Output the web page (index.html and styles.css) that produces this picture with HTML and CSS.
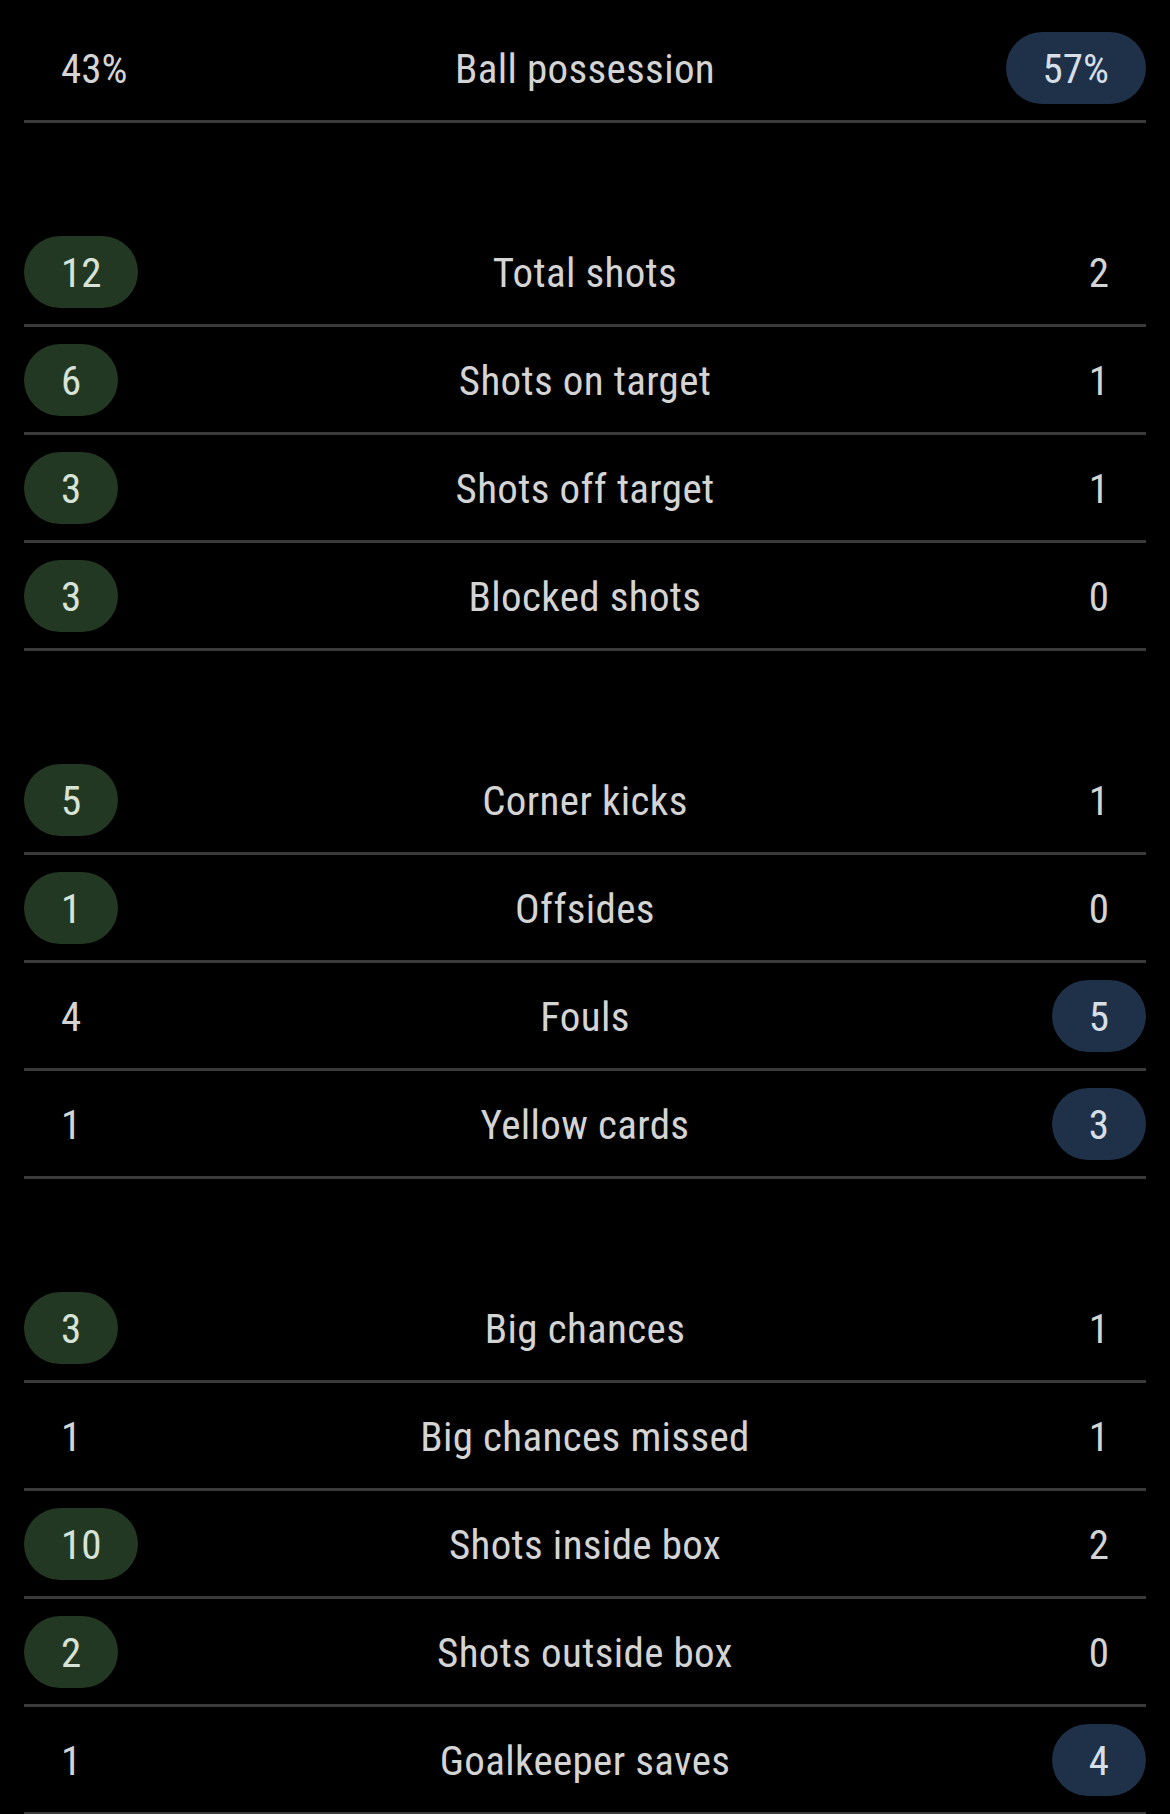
FILE: index.html
```html
<!DOCTYPE html>
<html lang="en">
<head>
<meta charset="utf-8">
<title>Match statistics</title>
<link rel="stylesheet" href="styles.css">
</head>
<body>
<main class="stats">
  <section class="group">
    <div class="row"><span class="val">43%</span><span class="label">Ball possession</span><span class="val away hl">57%</span></div>
  </section>
  <section class="group">
    <div class="row"><span class="val home hl">12</span><span class="label">Total shots</span><span class="val">2</span></div>
    <div class="row"><span class="val home hl">6</span><span class="label">Shots on target</span><span class="val">1</span></div>
    <div class="row"><span class="val home hl">3</span><span class="label">Shots off target</span><span class="val">1</span></div>
    <div class="row"><span class="val home hl">3</span><span class="label">Blocked shots</span><span class="val">0</span></div>
  </section>
  <section class="group">
    <div class="row"><span class="val home hl">5</span><span class="label">Corner kicks</span><span class="val">1</span></div>
    <div class="row"><span class="val home hl">1</span><span class="label">Offsides</span><span class="val">0</span></div>
    <div class="row"><span class="val">4</span><span class="label">Fouls</span><span class="val away hl">5</span></div>
    <div class="row"><span class="val">1</span><span class="label">Yellow cards</span><span class="val away hl">3</span></div>
  </section>
  <section class="group">
    <div class="row"><span class="val home hl">3</span><span class="label">Big chances</span><span class="val">1</span></div>
    <div class="row"><span class="val">1</span><span class="label">Big chances missed</span><span class="val">1</span></div>
    <div class="row"><span class="val home hl">10</span><span class="label">Shots inside box</span><span class="val">2</span></div>
    <div class="row"><span class="val home hl">2</span><span class="label">Shots outside box</span><span class="val">0</span></div>
    <div class="row"><span class="val">1</span><span class="label">Goalkeeper saves</span><span class="val away hl">4</span></div>
  </section>
</main>
</body>
</html>
```
FILE: styles.css
```css
html, body {
  margin: 0;
  padding: 0;
  background: #000;
}
body {
  font-family: "Roboto Condensed", Roboto, "Liberation Sans", sans-serif;
  font-stretch: 75%;
  font-weight: 400;
  color: #d4d4d4;
  font-size: 41px;
}
.stats {
  padding: 15px 24px 0;
  display: flex;
  flex-direction: column;
  gap: 96px;
}
.group {
  display: flex;
  flex-direction: column;
}
.row {
  height: 105px;
  border-bottom: 3px solid #3a3a3a;
  display: grid;
  grid-template-columns: 1fr auto 1fr;
  align-items: center;
}
.label {
  text-align: center;
  line-height: 1;
  padding-top: 4px;
  letter-spacing: 0.35px;
}
.val {
  justify-self: start;
  box-sizing: border-box;
  height: 72px;
  padding: 4px 37px 0;
  border-radius: 36px;
  display: flex;
  align-items: center;
  line-height: 1;
}
.row .val:last-child {
  justify-self: end;
}
.hl.home {
  background: #233823;
  color: #d8e3d8;
}
.hl.away {
  background: #1e3149;
  color: #d6dee8;
}
```
